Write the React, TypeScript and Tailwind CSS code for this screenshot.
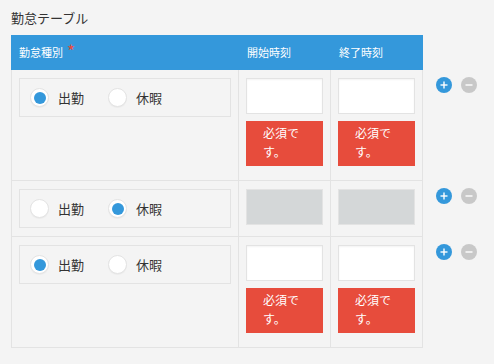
const font = { fontFamily: '"Noto Sans CJK JP", "Noto Sans", sans-serif' };

type Row = { kind: "work" | "leave"; tall: boolean };

const rows: Row[] = [
  { kind: "work", tall: true },
  { kind: "leave", tall: false },
  { kind: "work", tall: true },
];

const Radio = ({ checked, label }: { checked: boolean; label: string }) => (
  <div className="flex items-center">
    <span className="flex h-[19px] w-[19px] items-center justify-center rounded-full border border-[#e3e3e3] bg-white shadow-[0_1px_1px_rgba(0,0,0,0.04)]">
      {checked && <span className="h-[12px] w-[12px] rounded-full bg-[#3498db]" />}
    </span>
    <span className="ml-[9px] text-[13px] leading-none text-[#333]">{label}</span>
  </div>
);

const TimeCell = ({ disabled }: { disabled: boolean }) => (
  <div className="w-[92px] border-r border-[#e3e3e3] px-[7px] pt-2 pb-2">
    <div
      className={
        disabled
          ? "h-[36px] border border-[#e3e3e3] bg-[#d4d7d8]"
          : "h-[36px] border border-[#e3e3e3] bg-white shadow-[inset_0_1px_2px_rgba(0,0,0,0.05)]"
      }
    />
    {!disabled && (
      <div className="mt-[7px] mb-[6px] h-[45px] bg-[#e74c3c] px-[17px] pt-[2px] text-[12px] leading-[19px] text-white">
        必須です。
      </div>
    )}
  </div>
);

const RoundButton = ({ plus }: { plus: boolean }) => (
  <span
    className={
      plus
        ? "flex h-[16px] w-[16px] items-center justify-center rounded-full bg-[#3498db]"
        : "flex h-[16px] w-[16px] items-center justify-center rounded-full bg-[#c8c8c8]"
    }
  >
    <svg width="8" height="8" viewBox="0 0 8 8">
      <path d="M0.5 4h7" stroke="white" strokeWidth="1.4" />
      {plus && <path d="M4 0.5v7" stroke="white" strokeWidth="1.4" />}
    </svg>
  </span>
);

export default function App() {
  return (
    <div className="min-h-screen w-full bg-[#f4f4f4] pt-[8px]" style={font}>
      <div className="ml-[11px] h-[20px] text-[13px] leading-[20px] text-[#333]">勤怠テーブル</div>

      <div className="ml-[11px] mt-[7px]">
        {/* Header */}
        <div className="flex h-[35px] w-[412px] items-center bg-[#3498db] text-[11px] text-white">
          <div className="flex w-[228px] items-start pl-[8px]">
            <span>勤怠種別</span>
            <span className="ml-[4px] -mt-[2px] text-[17px] leading-none text-[#e74c3c]">*</span>
          </div>
          <div className="w-[92px] pl-[8px]">開始時刻</div>
          <div className="w-[92px] pl-[8px]">終了時刻</div>
        </div>

        {/* Rows */}
        {rows.map((row, i) => (
          <div key={i} className="flex">
            <div className="flex border-b border-[#e3e3e3]">
              <div className="w-[228px] border-x border-[#e3e3e3] px-[7px] pt-2 pb-2">
                <div className="flex h-[39px] items-center border border-[#e3e3e3] pl-[10px]">
                  <div className="w-[78px]">
                    <Radio checked={row.kind === "work"} label="出勤" />
                  </div>
                  <Radio checked={row.kind === "leave"} label="休暇" />
                </div>
              </div>
              <TimeCell disabled={!row.tall} />
              <TimeCell disabled={!row.tall} />
            </div>
            <div className="flex gap-[9px] pl-[13px] pt-[7px]">
              <RoundButton plus />
              <RoundButton plus={false} />
            </div>
          </div>
        ))}
      </div>
    </div>
  );
}
